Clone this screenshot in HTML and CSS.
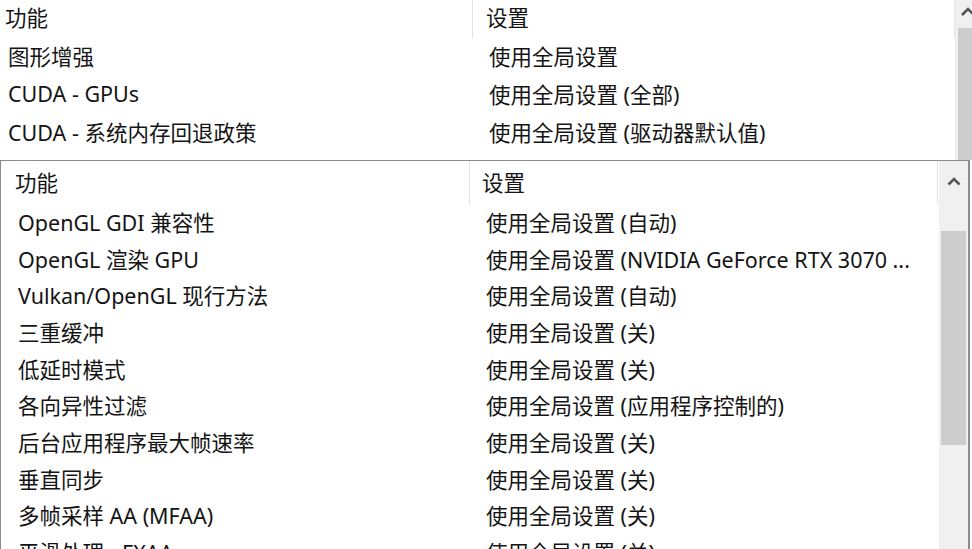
FILE: index.html
```html
<!DOCTYPE html>
<html lang="zh-CN">
<head>
<meta charset="utf-8">
<title>NVIDIA 设置</title>
<link rel="stylesheet" href="styles.css">
</head>
<body>
<div class="back">
  <div class="list back-list">
    <div class="hdr back-hdr"><div class="c1">功能</div><div class="c2">设置</div></div>
    <div class="row back-row"><div class="c1">图形增强</div><div class="c2">使用全局设置</div></div>
    <div class="row back-row"><div class="c1">CUDA - GPUs</div><div class="c2">使用全局设置 (全部)</div></div>
    <div class="row back-row"><div class="c1">CUDA - 系统内存回退政策</div><div class="c2">使用全局设置 (驱动器默认值)</div></div>
  </div>
  <div class="sb back-sb">
    <div class="sb-btn back-btn">
      <svg width="14" height="10" viewBox="0 0 14 10"><path d="M1 9 L7 3 L13 9" fill="none" stroke="#555" stroke-width="2.6"/></svg>
    </div>
    <div class="back-thumb"></div>
  </div>
</div>

<div class="front">
  <div class="list front-list">
    <div class="hdr front-hdr"><div class="c1">功能</div><div class="c2">设置</div></div>
    <div class="row front-row"><div class="c1">OpenGL GDI 兼容性</div><div class="c2">使用全局设置 (自动)</div></div>
    <div class="row front-row"><div class="c1">OpenGL 渲染 GPU</div><div class="c2">使用全局设置 (NVIDIA GeForce RTX 3070 ...</div></div>
    <div class="row front-row"><div class="c1">Vulkan/OpenGL 现行方法</div><div class="c2">使用全局设置 (自动)</div></div>
    <div class="row front-row"><div class="c1">三重缓冲</div><div class="c2">使用全局设置 (关)</div></div>
    <div class="row front-row"><div class="c1">低延时模式</div><div class="c2">使用全局设置 (关)</div></div>
    <div class="row front-row"><div class="c1">各向异性过滤</div><div class="c2">使用全局设置 (应用程序控制的)</div></div>
    <div class="row front-row"><div class="c1">后台应用程序最大帧速率</div><div class="c2">使用全局设置 (关)</div></div>
    <div class="row front-row"><div class="c1">垂直同步</div><div class="c2">使用全局设置 (关)</div></div>
    <div class="row front-row"><div class="c1">多帧采样 AA (MFAA)</div><div class="c2">使用全局设置 (关)</div></div>
    <div class="row front-row"><div class="c1">平滑处理 - FXAA</div><div class="c2">使用全局设置 (关)</div></div>
  </div>
  <div class="sb front-sb">
    <div class="sb-btn front-btn">
      <svg width="14" height="10" viewBox="0 0 14 10"><path d="M1.5 8.5 L7 3 L12.5 8.5" fill="none" stroke="#555" stroke-width="2.6"/></svg>
    </div>
    <div class="front-gap"></div>
    <div class="front-thumb"></div>
  </div>
</div>
</body>
</html>
```

FILE: styles.css
```css
html, body {
  margin: 0;
  padding: 0;
}
body {
  width: 972px;
  height: 549px;
  overflow: hidden;
  position: relative;
  background: #ffffff;
  font-family: "Noto Sans", "Noto Sans CJK SC", sans-serif;
  font-size: 21.5px;
  color: #141414;
}

.back {
  display: flex;
  height: 160px;
  overflow: hidden;
}
.list {
  display: flex;
  flex-direction: column;
}
.hdr, .row {
  display: flex;
  align-items: center;
  white-space: nowrap;
}
.c1, .c2 {
  display: flex;
  align-items: center;
  height: 100%;
  box-sizing: border-box;
  padding-bottom: 4px;
}

/* back panel */
.back-list {
  width: 955px;
  flex: none;
}
.back-hdr {
  height: 38px;
}
.back-hdr .c1 {
  width: 473px;
  padding-left: 5px;
  padding-bottom: 6px;
  border-right: 1px solid #e3e3e3;
}
.back-hdr .c2 {
  width: 482px;
  padding-left: 13px;
  padding-bottom: 6px;
  border-right: 1px solid #e3e3e3;
}
.back-row {
  height: 38px;
}
.back-row .c1 {
  width: 473px;
  padding-left: 8px;
}
.back-row .c2 {
  padding-left: 16px;
}
.back-sb {
  width: 29px;
  flex: none;
  display: flex;
  flex-direction: column;
  background: #f0f0f0;
}
.sb-btn {
  display: flex;
  justify-content: center;
  align-items: center;
}
.back-btn {
  height: 28px;
  justify-content: flex-start;
  padding-left: 6px;
  align-items: flex-start;
  padding-top: 6px;
  box-sizing: border-box;
}
.back-thumb {
  flex: 1;
  background: #cdcdcd;
  margin-left: 3px;
}

/* front panel */
.front {
  position: absolute;
  top: 160px;
  left: 0;
  width: 970px;
  height: 400px;
  box-sizing: border-box;
  border-top: 1px solid #8c8c8c;
  border-left: 1px solid #8c8c8c;
  border-right: 2px solid #8c8c8c;
  background: #ffffff;
  display: flex;
}
.front-list {
  width: 938px;
  flex: none;
}
.front-hdr {
  height: 44px;
  flex: none;
}
.front-hdr .c1 {
  width: 469px;
  padding-left: 14px;
  border-right: 1px solid #e3e3e3;
}
.front-hdr .c2 {
  width: 468px;
  padding-left: 12px;
  border-right: 1px solid #e3e3e3;
}
.front-row {
  height: 36.7px;
  flex: none;
}
.front-row .c1 {
  width: 469px;
  padding-left: 17px;
}
.front-row .c2 {
  padding-left: 16px;
}
.front-sb {
  width: 29px;
  flex: none;
  background: #f0f0f0;
  display: flex;
  flex-direction: column;
  align-items: center;
}
.front-btn {
  height: 40px;
  width: 100%;
  padding-top: 0;
}
.front-gap {
  height: 30px;
}
.front-thumb {
  width: 25px;
  height: 214px;
  background: #cdcdcd;
}
```
